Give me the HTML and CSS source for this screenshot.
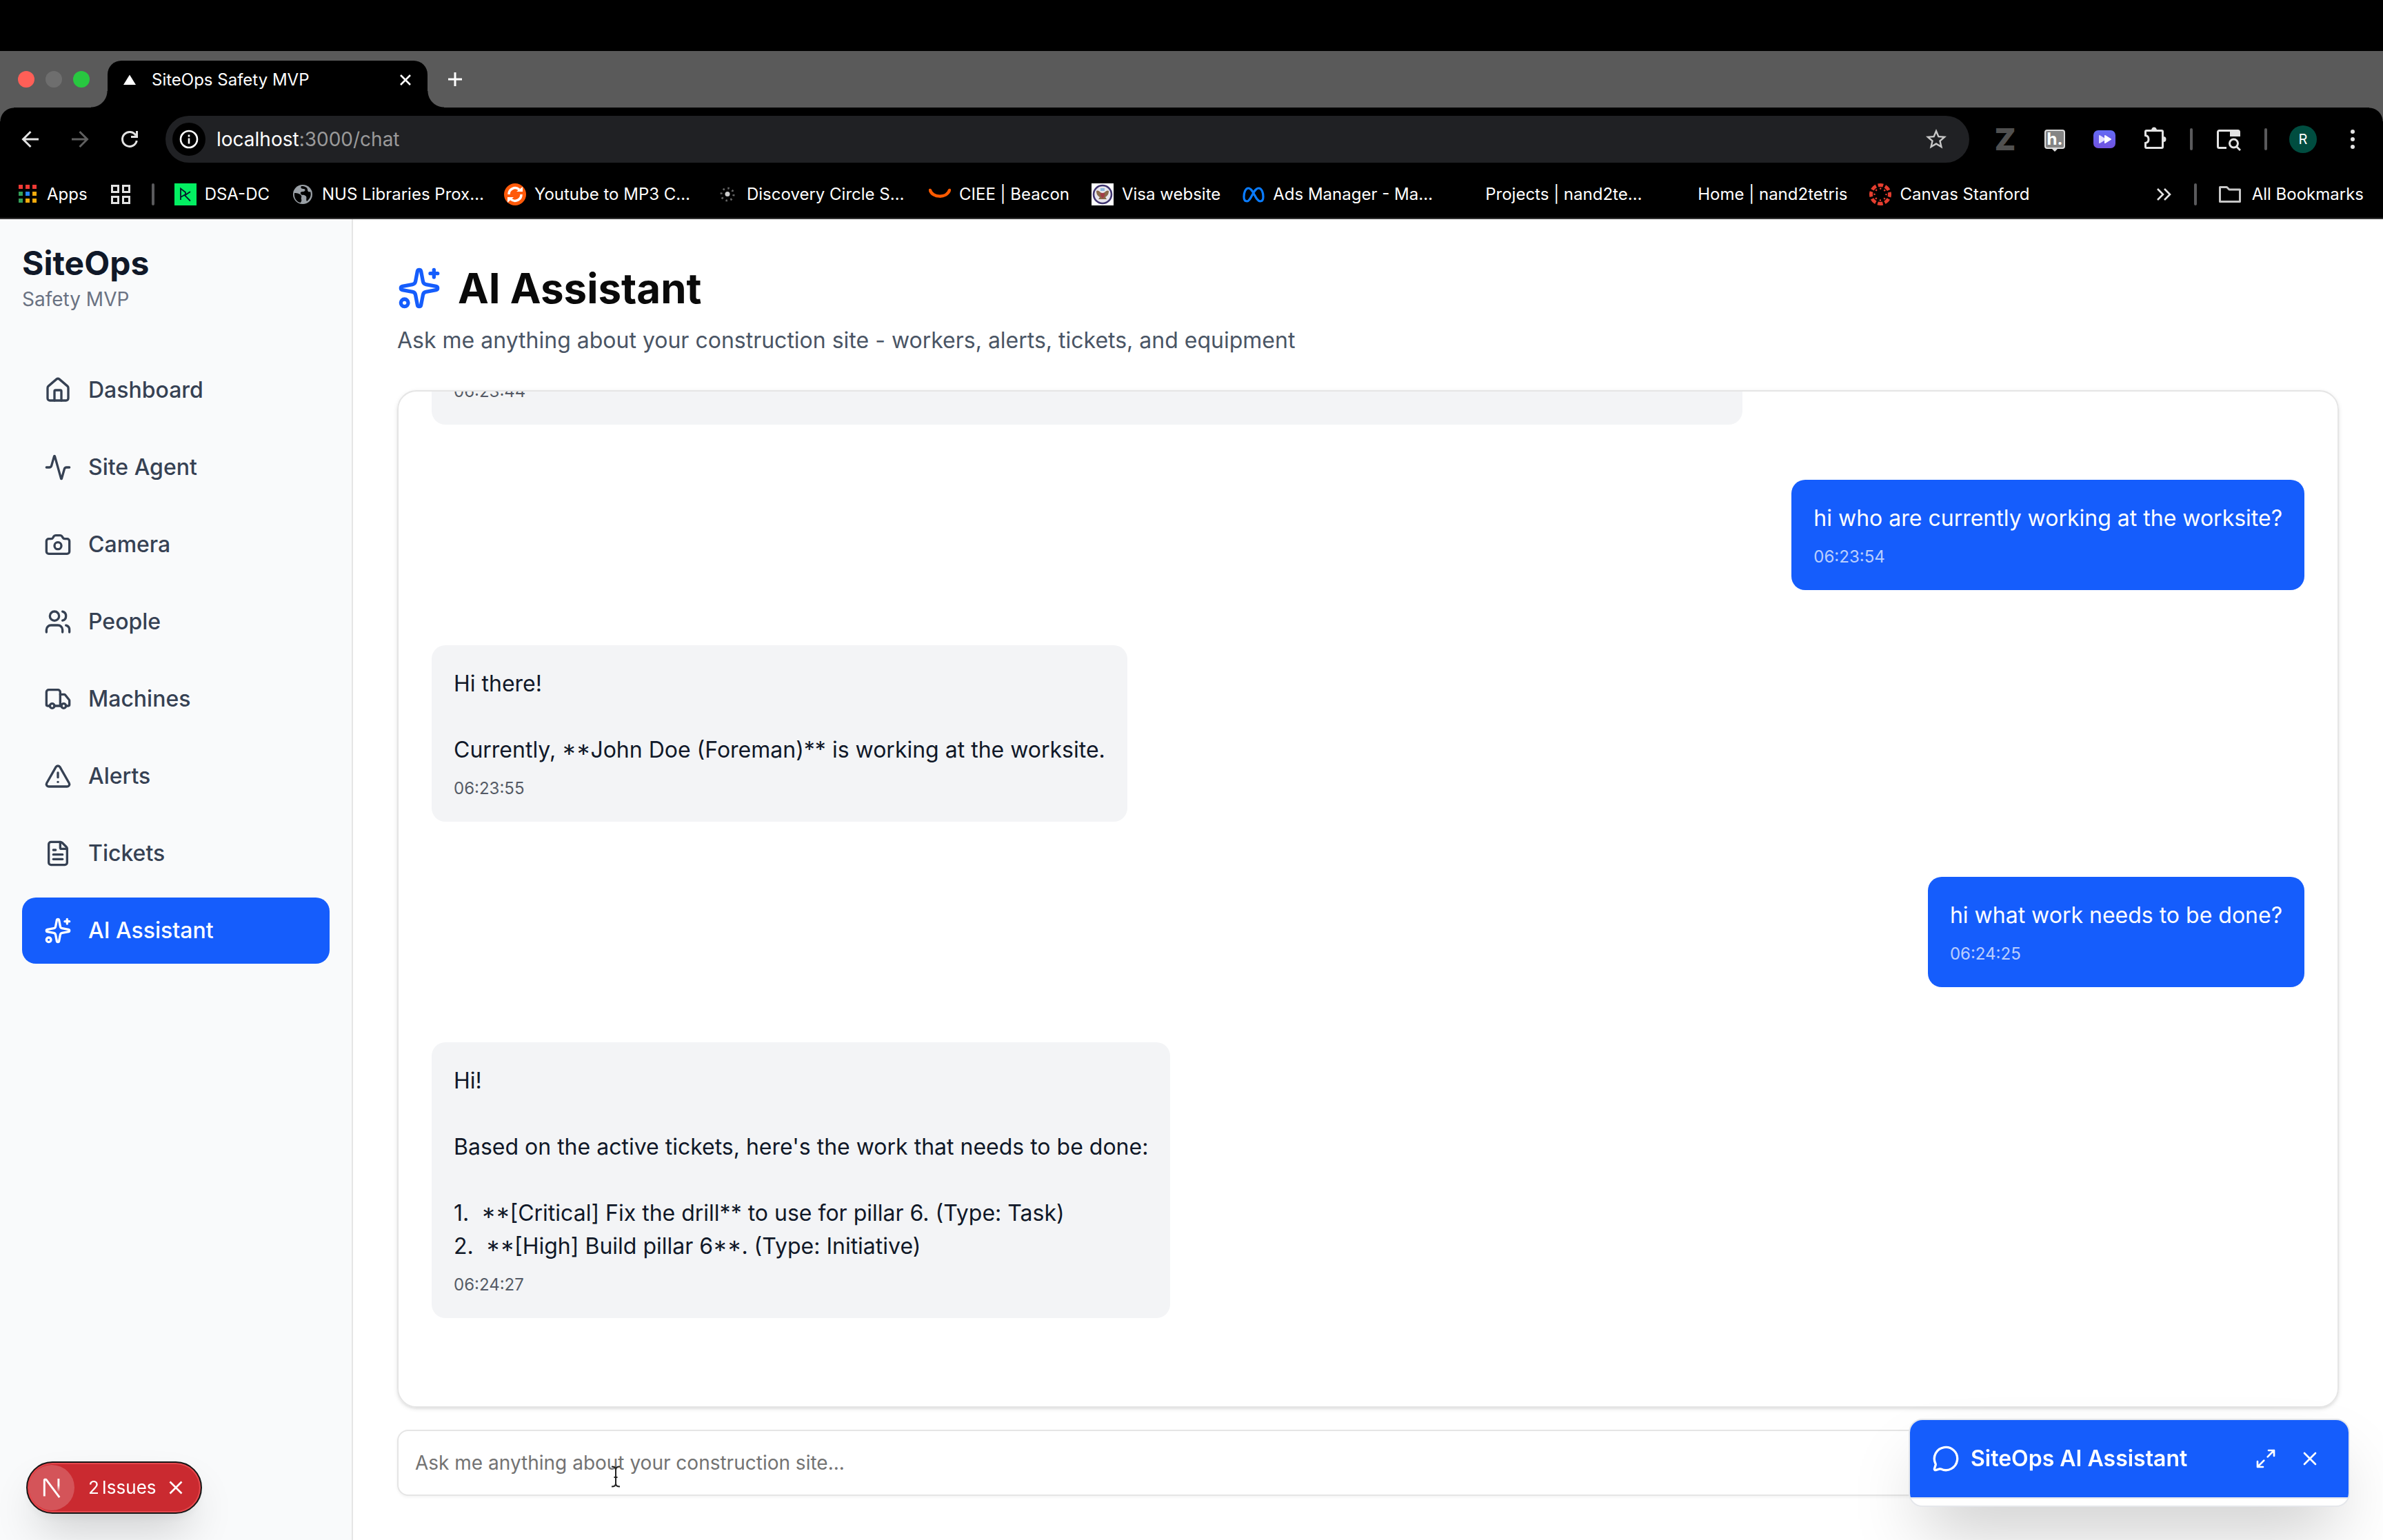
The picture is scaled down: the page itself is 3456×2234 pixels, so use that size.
FILE: index.html
```html
<!DOCTYPE html>
<html lang="en">
<head>
<meta charset="utf-8">
<title>SiteOps Safety MVP</title>
<link rel="stylesheet" href="styles.css">
</head>
<body>
<header class="browser">
  <div class="tabstrip">
    <div class="lights"><span class="light red"></span><span class="light gray"></span><span class="light green"></span></div>
    <div class="tab">
      <svg class="tab-icon" viewBox="0 0 32 32"><path d="M16 8.500 25 23H7z" fill="#fff"/></svg>
      <span class="tab-title">SiteOps Safety MVP</span>
      <button class="plain tab-close" aria-label="Close tab"><svg viewBox="0 0 24 24" width="24" height="24"><path d="M5 5l14 14M19 5 5 19" stroke="#fff" stroke-width="2.600" fill="none"/></svg></button>
    </div>
    <button class="plain new-tab" aria-label="New tab"><svg viewBox="0 0 24 24" width="24" height="24"><path d="M12 2v20M2 12h20" stroke="#fff" stroke-width="3" fill="none"/></svg></button>
  </div>
  <div class="toolbar">
    <button class="plain slot" aria-label="Back"><svg viewBox="0 0 32 32" width="32" height="32" fill="none" stroke="#e3e3e3" stroke-width="3"><path d="M28 16H6M16.500 5 5.500 16l11 11"/></svg></button>
    <button class="plain slot" aria-label="Forward"><svg viewBox="0 0 32 32" width="32" height="32" fill="none" stroke="#5f5f5f" stroke-width="3"><path d="M4 16h22M15.500 5l11 11-11 11"/></svg></button>
    <button class="plain slot" aria-label="Reload"><svg viewBox="0 0 32 32" width="32" height="32" fill="none" stroke="#e3e3e3" stroke-width="3"><path d="M25 10.500A10.500 10.500 0 1 0 26.300 18M26.500 4v8.500H18"/></svg></button>
    <div class="omnibox">
      <button class="plain site-info" aria-label="Site information"><svg viewBox="0 0 28 28" width="28" height="28" fill="none" stroke="#fff" stroke-width="2.600"><circle cx="14" cy="14" r="12"/><path d="M14 12.500v8M14 7.500v3"/></svg></button>
      <div class="url" role="textbox" aria-label="Address">localhost<span class="dim">:3000/chat</span></div>
      <button class="plain star" aria-label="Bookmark"><svg viewBox="0 0 24 24" width="36" height="36"><path d="m22 9.240-7.190-.620L12 2 9.190 8.630 2 9.240l5.460 4.730L5.820 21 12 17.270 18.180 21l-1.630-7.030zM12 15.400l-3.760 2.270 1-4.280-3.320-2.880 4.380-.380L12 6.100l1.710 4.040 4.380.380-3.320 2.880 1 4.280z" fill="#c7c7c7"/></svg></button>
    </div>
    <button class="plain slot" aria-label="Zotero"><span class="ext-z">Z</span></button>
    <button class="plain slot" aria-label="Hypothesis"><span class="ext-h">h.</span></button>
    <button class="plain slot" aria-label="Fast forward"><svg viewBox="0 0 32 32" width="32" height="32"><defs><linearGradient id="pg" x1="0" y1="0" x2="0" y2="1"><stop offset="0" stop-color="#646bf5"/><stop offset="1" stop-color="#7152df"/></linearGradient></defs><rect y="3" width="32" height="26" rx="7" fill="url(#pg)"/><path d="M9 11l8 5-8 5z" fill="#e4e0ff" stroke="#e4e0ff" stroke-width="2" stroke-linejoin="round"/><path d="M17 11l8 5-8 5z" fill="#fff" stroke="#fff" stroke-width="2" stroke-linejoin="round"/></svg></button>
    <button class="plain slot" aria-label="Extensions"><svg viewBox="0 0 36 36" width="36" height="36"><path d="M7 5.500h22a1.500 1.500 0 0 1 1.500 1.500v22a1.500 1.500 0 0 1-1.500 1.500H7A1.500 1.500 0 0 1 5.500 29v-5.500a5.600 5.600 0 0 0 0-11V7A1.500 1.500 0 0 1 7 5.500z" fill="none" stroke="#e3e3e3" stroke-width="3"/><path d="M14 5a4 4.500 0 0 1 8 0zM31.500 14a4 4 0 0 1 0 8z" fill="#e3e3e3"/></svg></button>
    <span class="sep"></span>
    <button class="plain slot" aria-label="Search tabs"><svg viewBox="0 0 36 36" width="36" height="36" fill="none" stroke="#e3e3e3" stroke-width="3"><path d="M15 30.500H4.500a2 2 0 0 1-2-2v-21a2 2 0 0 1 2-2h27a2 2 0 0 1 2 2V14"/><path d="M20 5h14v9H20z" fill="#e3e3e3" stroke="none"/><circle cx="25.500" cy="24" r="6"/><path d="m29.500 28.500 5.500 5.500"/></svg></button>
    <span class="sep"></span>
    <button class="plain slot" aria-label="Profile"><span class="avatar">R</span></button>
    <button class="plain slot" aria-label="Menu"><svg viewBox="0 0 32 32" width="32" height="32" fill="#e3e3e3"><circle cx="16" cy="5" r="3"/><circle cx="16" cy="16" r="3"/><circle cx="16" cy="27" r="3"/></svg></button>
  </div>
  <nav class="bookmarks" aria-label="Bookmarks">
    <a class="bm" href="#"><svg class="bmi" viewBox="0 0 32 32"><path d="M3 2h6v6H3zM13 2h6v6h-6zM23 2h6v6h-6z" fill="#f03a35"/><path d="M3 12h6v6H3zM3 22h6v6H3z" fill="#34a05a"/><path d="M13 12h6v6h-6z" fill="#2684fc"/><path d="M23 12h6v6h-6zM13 22h6v6h-6zM23 22h6v6h-6z" fill="#f5ab0c"/></svg>Apps</a>
    <a class="bm bm-grid" href="#" aria-label="Tab groups"><svg class="bmi" viewBox="0 0 32 32" fill="none" stroke="#e3e3e3" stroke-width="3"><path d="M3.500 3.500h9v9h-9zM19.500 3.500h9v9h-9zM3.500 19.500h9v9h-9zM19.500 19.500h9v9h-9z"/></svg></a>
    <span class="sep bm-sep"></span>
    <a class="bm" href="#"><svg class="bmi" viewBox="0 0 32 32"><path d="M0 0h32v32H0z" fill="#03ef62"/><path d="M9 24V7.500l7 5.500v3L9 20M23 12l-8 5.500 8 8" fill="none" stroke="#05192d" stroke-width="1.800"/></svg>DSA-DC</a>
    <a class="bm" href="#"><svg class="bmi" viewBox="0 0 32 32"><circle cx="16" cy="16" r="14" fill="#9aa0a6"/><path d="M4 14c5 0 8 1 10 4 1 2-1 3 0 5 1 3-1 4-1 5C7 27 3 21 4 14zM14 4c-2 3 1 4 4 4 3 1 1 4-1 4s-5 0-4 3 5 1 7 3c3 2 0 5 2 8 5-4 7-9 5-14-2 1-4 0-4-3s-4-5-9-5z" fill="#000"/></svg><span class="cut">NUS Libraries Prox…</span></a>
    <a class="bm" href="#"><svg class="bmi" viewBox="0 0 32 32"><circle cx="16" cy="16" r="16" fill="#ff5a0a"/><path d="M7 16a9 9 0 0 1 15-7M25 16a9 9 0 0 1-15 7" fill="none" stroke="#fff" stroke-width="3.500"/><path d="M18 12h9V5zM14 20H5v8z" fill="#fff"/></svg><span class="cut">Youtube to MP3 C…</span></a>
    <a class="bm" href="#"><svg class="bmi" viewBox="0 0 32 32"><circle cx="16" cy="15.500" r="3.500" fill="#ccc"/><circle cx="16" cy="16" r="9" fill="none" stroke="#666" stroke-width="3" stroke-dasharray="2.500 4.570"/></svg><span class="cut">Discovery Circle S…</span></a>
    <a class="bm" href="#"><svg class="bmi" viewBox="0 0 32 32"><path d="M2 10c3 11 24 12 28 0" fill="none" stroke="#ff5a00" stroke-width="4.500" stroke-linecap="round"/></svg>CIEE | Beacon</a>
    <a class="bm" href="#"><svg class="bmi" viewBox="0 0 32 32"><path d="M0 0h32v32H0z" fill="#fff"/><circle cx="16" cy="16" r="13" fill="#e8e6ee" stroke="#3f3470" stroke-width="2.600"/><path d="M7 11c4-2 5 3 9 3s5-5 9-3c0 5-2 7-5 9l2 3H10l2-3c-3-2-5-4-5-9z" fill="#8a6a4c"/><path d="M13 7h6v4h-6z" fill="#8cb8dc"/><path d="M13 14h6v4l-3 4-3-4z" fill="#a23c46"/></svg>Visa website</a>
    <a class="bm" href="#"><svg class="bmi" viewBox="0 0 32 32"><path d="M8.500 7C4 7 2 14 2 19.500 2 23.500 3.600 26 6.500 26c6 0 9-19 17-19C28 7 30 14 30 19.500c0 4-1.600 6.500-4.500 6.500C19 26 15.500 7 8.500 7z" fill="none" stroke="#0a7cff" stroke-width="3.200"/></svg><span class="cut">Ads Manager - Ma…</span></a>
    <a class="bm" href="#"><span class="bmi"></span><span class="cut">Projects | nand2te…</span></a>
    <a class="bm" href="#"><span class="bmi"></span>Home | nand2tetris</a>
    <a class="bm" href="#"><svg class="bmi" viewBox="0 0 32 32" fill="none" stroke="#e63e2f"><circle cx="16" cy="16" r="13.500" stroke-width="5" stroke-dasharray="7.600 3" stroke-dashoffset="3.800"/><circle cx="16" cy="16" r="8.500" stroke-width="2.400" stroke-dasharray="2.200 4.475" stroke-dashoffset="1.100"/></svg>Canvas Stanford</a>
    <div class="bm-right">
      <button class="plain more" aria-label="More bookmarks"><svg viewBox="0 0 24 24" width="24" height="24" fill="none" stroke="#e3e3e3" stroke-width="2.600"><path d="m3 4 8 8-8 8M13 4l8 8-8 8"/></svg></button>
      <span class="sep"></span>
      <a class="bm all" href="#"><svg class="bmi" viewBox="0 0 32 32" fill="none" stroke="#c7c7c7" stroke-width="3" stroke-linejoin="round"><path d="M1.500 5.500h10L15 9h15.500v17.500h-29z"/></svg>All Bookmarks</a>
    </div>
  </nav>
</header>

<div class="app">
  <aside class="sidebar">
    <div class="brand"><div class="brand-name">SiteOps</div><div class="brand-sub">Safety MVP</div></div>
    <nav class="nav" aria-label="Main">
      <a class="nav-item" href="#"><svg class="icon" viewBox="0 0 24 24"><path d="M15 21v-8a1 1 0 0 0-1-1h-4a1 1 0 0 0-1 1v8"/><path d="M3 10a2 2 0 0 1 .709-1.528l7-5.999a2 2 0 0 1 2.582 0l7 5.999A2 2 0 0 1 21 10v9a2 2 0 0 1-2 2H5a2 2 0 0 1-2-2z"/></svg>Dashboard</a>
      <a class="nav-item" href="#"><svg class="icon" viewBox="0 0 24 24"><path d="M22 12h-2.480a2 2 0 0 0-1.930 1.460l-2.350 8.360a.25.25 0 0 1-.480 0L9.240 2.180a.25.25 0 0 0-.480 0l-2.350 8.360A2 2 0 0 1 4.490 12H2"/></svg>Site Agent</a>
      <a class="nav-item" href="#"><svg class="icon" viewBox="0 0 24 24"><path d="M13.997 4a2 2 0 0 1 1.760 1.050l.486.900A2 2 0 0 0 18.003 7H20a2 2 0 0 1 2 2v9a2 2 0 0 1-2 2H4a2 2 0 0 1-2-2V9a2 2 0 0 1 2-2h1.997a2 2 0 0 0 1.759-1.048l.489-.904A2 2 0 0 1 10.004 4z"/><circle cx="12" cy="13" r="3"/></svg>Camera</a>
      <a class="nav-item" href="#"><svg class="icon" viewBox="0 0 24 24"><path d="M16 21v-2a4 4 0 0 0-4-4H6a4 4 0 0 0-4 4v2"/><path d="M16 3.128a4 4 0 0 1 0 7.744"/><path d="M22 21v-2a4 4 0 0 0-3-3.870"/><circle cx="9" cy="7" r="4"/></svg>People</a>
      <a class="nav-item" href="#"><svg class="icon" viewBox="0 0 24 24"><path d="M14 18V6a2 2 0 0 0-2-2H4a2 2 0 0 0-2 2v11a1 1 0 0 0 1 1h2"/><path d="M15 18H9"/><path d="M19 18h2a1 1 0 0 0 1-1v-3.650a1 1 0 0 0-.220-.624l-3.480-4.350A1 1 0 0 0 17.520 8H14"/><circle cx="17" cy="18" r="2"/><circle cx="7" cy="18" r="2"/></svg>Machines</a>
      <a class="nav-item" href="#"><svg class="icon" viewBox="0 0 24 24"><path d="m21.730 18-8-14a2 2 0 0 0-3.480 0l-8 14A2 2 0 0 0 4 21h16a2 2 0 0 0 1.730-3"/><path d="M12 9v4"/><path d="M12 17h.010"/></svg>Alerts</a>
      <a class="nav-item" href="#"><svg class="icon" viewBox="0 0 24 24"><path d="M6 22a2 2 0 0 1-2-2V4a2 2 0 0 1 2-2h8a2.400 2.400 0 0 1 1.704.706l3.588 3.588A2.400 2.400 0 0 1 20 8v12a2 2 0 0 1-2 2z"/><path d="M14 2v5a1 1 0 0 0 1 1h5"/><path d="M10 9H8"/><path d="M16 13H8"/><path d="M16 17H8"/></svg>Tickets</a>
      <a class="nav-item active" href="#" aria-current="page"><svg class="icon" viewBox="0 0 24 24"><path d="M11.017 2.814a1 1 0 0 1 1.966 0l1.051 5.558a2 2 0 0 0 1.594 1.594l5.558 1.051a1 1 0 0 1 0 1.966l-5.558 1.051a2 2 0 0 0-1.594 1.594l-1.051 5.558a1 1 0 0 1-1.966 0l-1.051-5.558a2 2 0 0 0-1.594-1.594l-5.558-1.051a1 1 0 0 1 0-1.966l5.558-1.051a2 2 0 0 0 1.594-1.594z"/><path d="M20 2v4"/><path d="M22 4h-4"/><circle cx="4" cy="20" r="2"/></svg>AI Assistant</a>
    </nav>
  </aside>

  <main class="main">
    <h1 class="title"><svg class="icon title-icon" viewBox="0 0 24 24"><path d="M11.017 2.814a1 1 0 0 1 1.966 0l1.051 5.558a2 2 0 0 0 1.594 1.594l5.558 1.051a1 1 0 0 1 0 1.966l-5.558 1.051a2 2 0 0 0-1.594 1.594l-1.051 5.558a1 1 0 0 1-1.966 0l-1.051-5.558a2 2 0 0 0-1.594-1.594l-5.558-1.051a1 1 0 0 1 0-1.966l5.558-1.051a2 2 0 0 0 1.594-1.594z"/><path d="M20 2v4"/><path d="M22 4h-4"/><circle cx="4" cy="20" r="2"/></svg>AI Assistant</h1>
    <p class="subtitle">Ask me anything about your construction site - workers, alerts, tickets, and equipment</p>
    <section class="chat" aria-label="Conversation">
      <div class="msg wide"><div class="time">06:23:44</div></div>
      <div class="msg user"><p>hi who are currently working at the worksite?</p><div class="time">06:23:54</div></div>
      <div class="msg"><p>Hi there!

Currently, <span class="low">**</span>John Doe (Foreman)** is working at the worksite.</p><div class="time">06:23:55</div></div>
      <div class="msg user"><p>hi what work needs to be done?</p><div class="time">06:24:25</div></div>
      <div class="msg"><p>Hi!

Based on the active tickets, here's the work that needs to be done:

1.  <span class="low">**[</span>Critical] Fix the drill** to use for pillar 6. (Type: Task)
2.  <span class="low">**[</span>High] Build pillar 6<span class="low">**</span>. (Type: Initiative)</p><div class="time">06:24:27</div></div>
      <div class="chat-end"></div>
    </section>
    <form class="composer">
      <input class="field" type="text" placeholder="Ask me anything about your construction site..." aria-label="Message">
      <svg class="caret" viewBox="0 0 14 32" width="14" height="32" fill="none" stroke="#222" stroke-width="2"><path d="M1 1.500c4 0 6 1.500 6 4.500v20c0 3-2 4.500-6 4.500M13 1.500c-4 0-6 1.500-6 4.500M13 30.500c-4 0-6-1.500-6-4.500M4.500 17h5"/></svg>
    </form>
  </main>
</div>

<div class="issues">
  <span class="issues-logo"><svg viewBox="0 0 32 32" width="36" height="36" fill="none"><defs><linearGradient id="n1" x1="0" y1="0" x2="0" y2="1"><stop offset=".5" stop-color="#fff"/><stop offset="1" stop-color="#fff" stop-opacity="0"/></linearGradient></defs><path d="M6.500 27V5.500h2.200L26 28.500" stroke="#fff" stroke-width="2.600" stroke-linejoin="bevel"/><path d="M23.500 4.500h2.600v17h-2.600z" fill="url(#n1)"/></svg></span>
  <button class="plain issues-text"><span>2</span><span>Issues</span></button>
  <button class="plain issues-close" aria-label="Dismiss issues"><svg viewBox="0 0 24 24" width="24" height="24"><path d="M3.500 3.500l17 17M20.500 3.500l-17 17" stroke="#fff" stroke-width="2.600" fill="none"/></svg></button>
</div>

<section class="widget" aria-label="SiteOps AI Assistant">
  <div class="widget-head">
    <svg class="icon" viewBox="0 0 24 24"><path d="M2.992 16.342a2 2 0 0 1 .094 1.167l-1.065 3.290a1 1 0 0 0 1.236 1.168l3.413-.998a2 2 0 0 1 1.099.092 10 10 0 1 0-4.777-4.719"/></svg>
    <h2 class="widget-title">SiteOps AI Assistant</h2>
    <button class="plain widget-btn" aria-label="Expand"><svg class="icon small" viewBox="0 0 24 24"><path d="M15 3h6v6M21 3l-7 7M3 21l7-7M9 21H3v-6"/></svg></button>
    <button class="plain widget-btn" aria-label="Close"><svg class="icon small" viewBox="0 0 24 24"><path d="M18 6 6 18M6 6l12 12"/></svg></button>
  </div>
</section>
</body>
</html>
```
FILE: styles.css
```css
*, *::before, *::after { box-sizing: border-box; }

body {
  margin: 0;
  height: 100vh;
  display: flex;
  flex-direction: column;
  overflow: hidden;
  background: #fff;
  color: #0a0a0a;
  font-family: Inter, "Liberation Sans", sans-serif;
  font-size: 32px;
  line-height: 48px;
}

h1, h2, p { margin: 0; }
a { color: inherit; text-decoration: none; }
svg { display: block; flex: none; }

.plain {
  display: flex;
  align-items: center;
  justify-content: center;
  padding: 0;
  border: 0;
  background: none;
  color: inherit;
  font: inherit;
}

/* Browser chrome */
.browser {
  flex: none;
  padding-top: 74px;
  border-bottom: 2px solid #333;
  background: #000;
  color: #fff;
  font-size: 24px;
  line-height: 32px;
}

.tabstrip {
  display: flex;
  height: 82px;
  background: #5a5a5a;
}

.lights {
  display: flex;
  align-items: center;
  gap: 16px;
  width: 156px;
  padding-left: 26px;
}
.light { width: 24px; height: 24px; border-radius: 50%; }
.red { background: #ff5f57; }
.gray { background: #6e6e6e; }
.green { background: #28c840; }

.tab {
  position: relative;
  display: flex;
  align-items: center;
  width: 464px;
  margin-top: 14px;
  padding: 0 20px 12px 16px;
  border-radius: 20px 20px 0 0;
  background: #000;
}
.tab::before, .tab::after {
  content: "";
  position: absolute;
  bottom: 0;
  width: 24px;
  height: 24px;
}
.tab::before { left: -24px; background: radial-gradient(circle at 0 0, transparent 23px, #000 24px); }
.tab::after { right: -24px; background: radial-gradient(circle at 100% 0, transparent 23px, #000 24px); }
.tab-icon { width: 32px; height: 32px; }
.tab-title { flex: 1; padding-left: 16px; }
.new-tab { width: 80px; }

.toolbar {
  display: flex;
  align-items: center;
  height: 92px;
  padding: 0 8px;
  background:
    radial-gradient(circle at 20px 20px, transparent 19px, #5a5a5a 20px) 0 0 / 20px 20px no-repeat,
    radial-gradient(circle at 0 20px, transparent 19px, #5a5a5a 20px) 100% 0 / 20px 20px no-repeat,
    #000;
}
.slot { width: 72px; height: 48px; }
.omnibox {
  flex: 1;
  display: flex;
  align-items: center;
  gap: 16px;
  height: 68px;
  margin: 0 16px;
  padding: 0 24px 0 10px;
  border-radius: 34px;
  background: #202124;
}
.site-info { width: 48px; height: 48px; border-radius: 50%; background: #000; }
.url { flex: 1; font-size: 28px; }
.dim { color: #9a9a9a; }
.star { width: 48px; height: 48px; }
.sep { flex: none; width: 4px; height: 32px; margin: 0 16px; border-radius: 2px; background: #5a5a5c; }

.ext-z { color: #505050; font-size: 44px; font-weight: 900; }
.ext-h {
  position: relative;
  width: 30px;
  height: 28px;
  border: 2px solid #ddd;
  border-radius: 4px;
  background: #858585;
  font-size: 24px;
  font-weight: 700;
  line-height: 24px;
}
.ext-h::after {
  content: "";
  position: absolute;
  left: 9px;
  top: 26px;
  border: 4px solid transparent;
  border-top-color: #ddd;
}
.avatar {
  width: 40px;
  height: 40px;
  border-radius: 50%;
  background: #004d40;
  font-size: 20px;
  line-height: 40px;
}

.bookmarks {
  display: flex;
  align-items: center;
  gap: 32px;
  height: 68px;
  padding: 0 28px 0 24px;
  white-space: nowrap;
}
.bm { display: flex; align-items: center; gap: 12px; }
.bmi { flex: none; width: 32px; height: 32px; }
.cut { width: 232px; }
.bm-sep { margin: 0 -3px; }
.bm-right { display: flex; align-items: center; margin-left: auto; }
.bm-right .sep { margin: 0 32px; }
.all { gap: 16px; }

/* Application */
.icon {
  width: 40px;
  height: 40px;
  fill: none;
  stroke: currentColor;
  stroke-width: 2;
  stroke-linecap: round;
  stroke-linejoin: round;
}
.small { width: 32px; height: 32px; }

.app { flex: 1; display: flex; min-height: 0; }

.sidebar {
  flex: none;
  width: 512px;
  border-right: 2px solid #e5e5e5;
  background: #f9fafb;
}
.brand { padding: 32px; }
.brand-name { color: #101828; font-size: 48px; font-weight: 700; line-height: 64px; }
.brand-sub { color: #6a7282; font-size: 28px; line-height: 40px; }
.nav { display: flex; flex-direction: column; gap: 16px; padding: 32px; }
.nav-item {
  display: flex;
  align-items: center;
  gap: 24px;
  padding: 24px 32px;
  border-radius: 20px;
  color: #364153;
  font-weight: 500;
}
.active { background: #155dfc; color: #fff; }

.main {
  flex: 1;
  display: flex;
  flex-direction: column;
  min-width: 0;
  padding: 64px;
}
.title { display: flex; align-items: center; gap: 24px; font-size: 60px; font-weight: 700; line-height: 72px; }
.title-icon { width: 64px; height: 64px; color: #155dfc; }
.subtitle { margin-top: 16px; color: #4a5565; }

.chat {
  flex: 1;
  display: flex;
  flex-direction: column;
  justify-content: flex-end;
  align-items: flex-start;
  gap: 80px;
  min-height: 0;
  margin-top: 48px;
  padding: 48px;
  overflow: hidden;
  border: 2px solid #e5e5e5;
  border-radius: 28px;
  box-shadow: 0 2px 6px rgba(0, 0, 0, .1), 0 2px 4px -2px rgba(0, 0, 0, .1);
}
.msg {
  flex: none;
  max-width: 70%;
  padding: 32px;
  border-radius: 20px;
  background: #f3f4f6;
  color: #101828;
}
.msg p { margin-bottom: 16px; white-space: pre-wrap; }
/* Case-sensitive asterisk forms beside capitals and figures */
.low { font-feature-settings: "case"; }
.wide { width: 70%; }
.user { align-self: flex-end; background: #155dfc; color: #fff; }
.time { font-size: 24px; line-height: 32px; opacity: .7; }
.chat-end { height: 0; }

.composer { position: relative; display: flex; margin-top: 32px; }
.field {
  flex: 1;
  height: 96px;
  padding: 0 24px;
  border: 2px solid #e5e5e5;
  border-radius: 16px;
  background: #fff;
  box-shadow: 0 2px 4px rgba(0, 0, 0, .05);
  font: inherit;
  font-size: 28px;
}
.field::placeholder { color: #737373; opacity: 1; }
.caret { position: absolute; left: 310px; top: 52px; }

/* Floating pieces */
.issues {
  position: fixed;
  left: 38px;
  bottom: 38px;
  display: flex;
  align-items: center;
  width: 255px;
  height: 76px;
  padding-left: 2px;
  border: 2px solid #171717;
  border-radius: 38px;
  background: #ca2a30;
  box-shadow: inset 0 0 0 2px #e5484d, 0 32px 64px -16px rgba(0, 0, 0, .24), 0 8px 16px -4px rgba(0, 0, 0, .06);
  color: #fff;
  font-size: 26px;
  line-height: 32px;
}
.issues-logo {
  display: flex;
  align-items: center;
  justify-content: center;
  width: 66px;
  height: 66px;
  border-radius: 50%;
  background: rgba(255, 255, 255, .2);
}
.issues-text { gap: 4px; padding: 0 16px 0 20px; }

.widget {
  position: fixed;
  right: 48px;
  bottom: 48px;
  width: 640px;
  padding-bottom: 10px;
  overflow: hidden;
  border: 2px solid #e5e7eb;
  border-radius: 20px;
  background: #fff;
  box-shadow: 0 50px 100px -24px rgba(0, 0, 0, .25);
}
.widget-head {
  display: flex;
  align-items: center;
  gap: 16px;
  padding: 32px;
  border-bottom: 2px solid #e5e7eb;
  background: #155dfc;
  background-clip: padding-box;
  color: #fff;
}
.widget-title { flex: 1; font-size: 32px; font-weight: 600; line-height: 48px; }
.widget-btn { width: 48px; height: 48px; }
```
